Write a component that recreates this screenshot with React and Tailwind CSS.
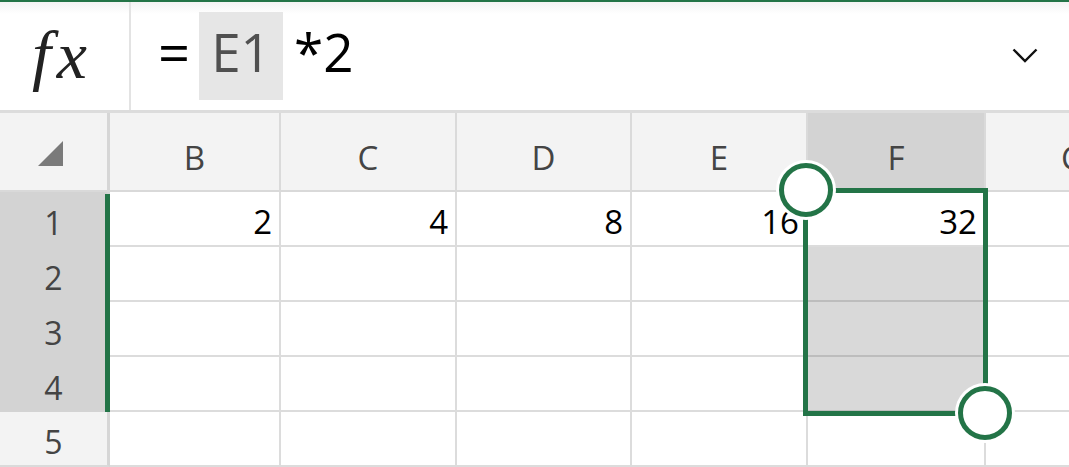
import React from 'react'

const COLS = [
  { id: 'B', w: 171 },
  { id: 'C', w: 176 },
  { id: 'D', w: 175 },
  { id: 'E', w: 176 },
  { id: 'F', w: 178 },
  { id: 'G', w: 176 },
]

const ROWS = [
  { n: 1, vals: { B: '2', C: '4', D: '8', E: '16', F: '32' } },
  { n: 2, vals: {} },
  { n: 3, vals: {} },
  { n: 4, vals: {} },
  { n: 5, vals: {} },
]

const font = { fontFamily: '"Open Sans", "Noto Sans", sans-serif' }

function Handle({ className }) {
  return (
    <div
      className={`absolute w-[54px] h-[54px] rounded-full bg-white border-[5px] border-[#237447] shadow-[0_0_0_3px_#ffffff] ${className}`}
    />
  )
}

export default function App() {
  return (
    <div className="relative w-[1069px] h-[467px] overflow-hidden bg-white" style={font}>
      {/* formula bar */}
      <div className="relative flex h-[113px] border-t-2 border-b-[3px] border-t-[#237447] border-b-[#dcdcdc] bg-white">
        <div className="absolute left-0 right-0 top-0 h-[12px] bg-gradient-to-b from-[#f3f3f3] to-white" />
        <div className="relative w-[131px] flex items-center justify-center border-r-2 border-[#e3e3e3]">
          <span
            className="text-[68px] italic text-[#222] leading-none tracking-[6px] -mt-[2px] pr-[4px]"
            style={{ fontFamily: '"Liberation Serif", serif' }}
          >
            fx
          </span>
        </div>
        <div className="relative flex-1 flex items-center pl-[27px]">
          <span className="text-[56px] text-black leading-none mr-[9px] mb-[10px]">=</span>
          <span className="w-[84px] h-[88px] bg-[#e6e6e6] flex items-center justify-center pb-[10px] text-[53px] text-[#505050] leading-none">
            E1
          </span>
          <span className="text-[53px] text-black leading-none ml-[11px] mb-[10px]">*2</span>
          <div className="flex-1" />
          <svg width="26" height="15" viewBox="0 0 26 15" className="mr-[31px] -mt-[2px]">
            <polyline points="1.5,1.5 13,13 24.5,1.5" fill="none" stroke="#111" strokeWidth="2.4" />
          </svg>
        </div>
      </div>

      {/* column headers */}
      <div className="flex h-[79px] bg-[#f3f3f3] border-b-2 border-[#d9d9d9]">
        <div className="w-[110px] shrink-0 border-r-[3px] border-[#d6d6d6] flex items-center justify-center">
          <svg width="26" height="26" viewBox="0 0 26 26" className="mt-[5px] mr-[6px]">
            <polygon points="25,0 25,25 0,25" fill="#7a7a7a" />
          </svg>
        </div>
        {COLS.map((c) => (
          <div
            key={c.id}
            className={`shrink-0 flex items-center justify-center pt-[12px] text-[33px] text-[#444] border-r-2 border-[#dadada] ${
              c.id === 'F' ? 'bg-[#d3d3d3]' : ''
            }`}
            style={{ width: c.w }}
          >
            {c.id}
          </div>
        ))}
      </div>

      {/* rows */}
      {ROWS.map((r) => (
        <div key={r.n} className="flex h-[55px]">
          <div
            className={`w-[110px] shrink-0 flex items-center justify-center pt-[6px] text-[32px] text-[#444] border-r-[3px] border-[#d6d6d6] ${
              r.n <= 4 ? 'bg-[#d3d3d3]' : 'bg-[#f3f3f3] border-b-2 border-b-[#dadada]'
            }`}
          >
            {r.n}
          </div>
          {COLS.map((c) => {
            const shaded = c.id === 'F' && r.n >= 2 && r.n <= 4
            return (
              <div
                key={c.id}
                className={`shrink-0 flex items-center justify-end pr-[7px] pt-[6px] text-[33px] text-black whitespace-nowrap overflow-hidden border-r-2 border-b-2 ${
                  shaded ? 'bg-[#d9d9d9] border-[#bdbdbd]' : 'border-[#dcdcdc]'
                }`}
                style={{ width: c.w }}
              >
                {r.vals[c.id] || ''}
              </div>
            )
          })}
        </div>
      ))}

      {/* row selection marker */}
      <div className="absolute left-[105px] top-[194px] w-[5px] h-[218px] bg-[#237447]" />

      {/* selected range */}
      <div className="absolute left-[803px] top-[188px] w-[185px] h-[228px] border-[5px] border-[#237447]" />
      <Handle className="left-[779px] top-[163px]" />
      <Handle className="left-[958px] top-[386px]" />
    </div>
  )
}
